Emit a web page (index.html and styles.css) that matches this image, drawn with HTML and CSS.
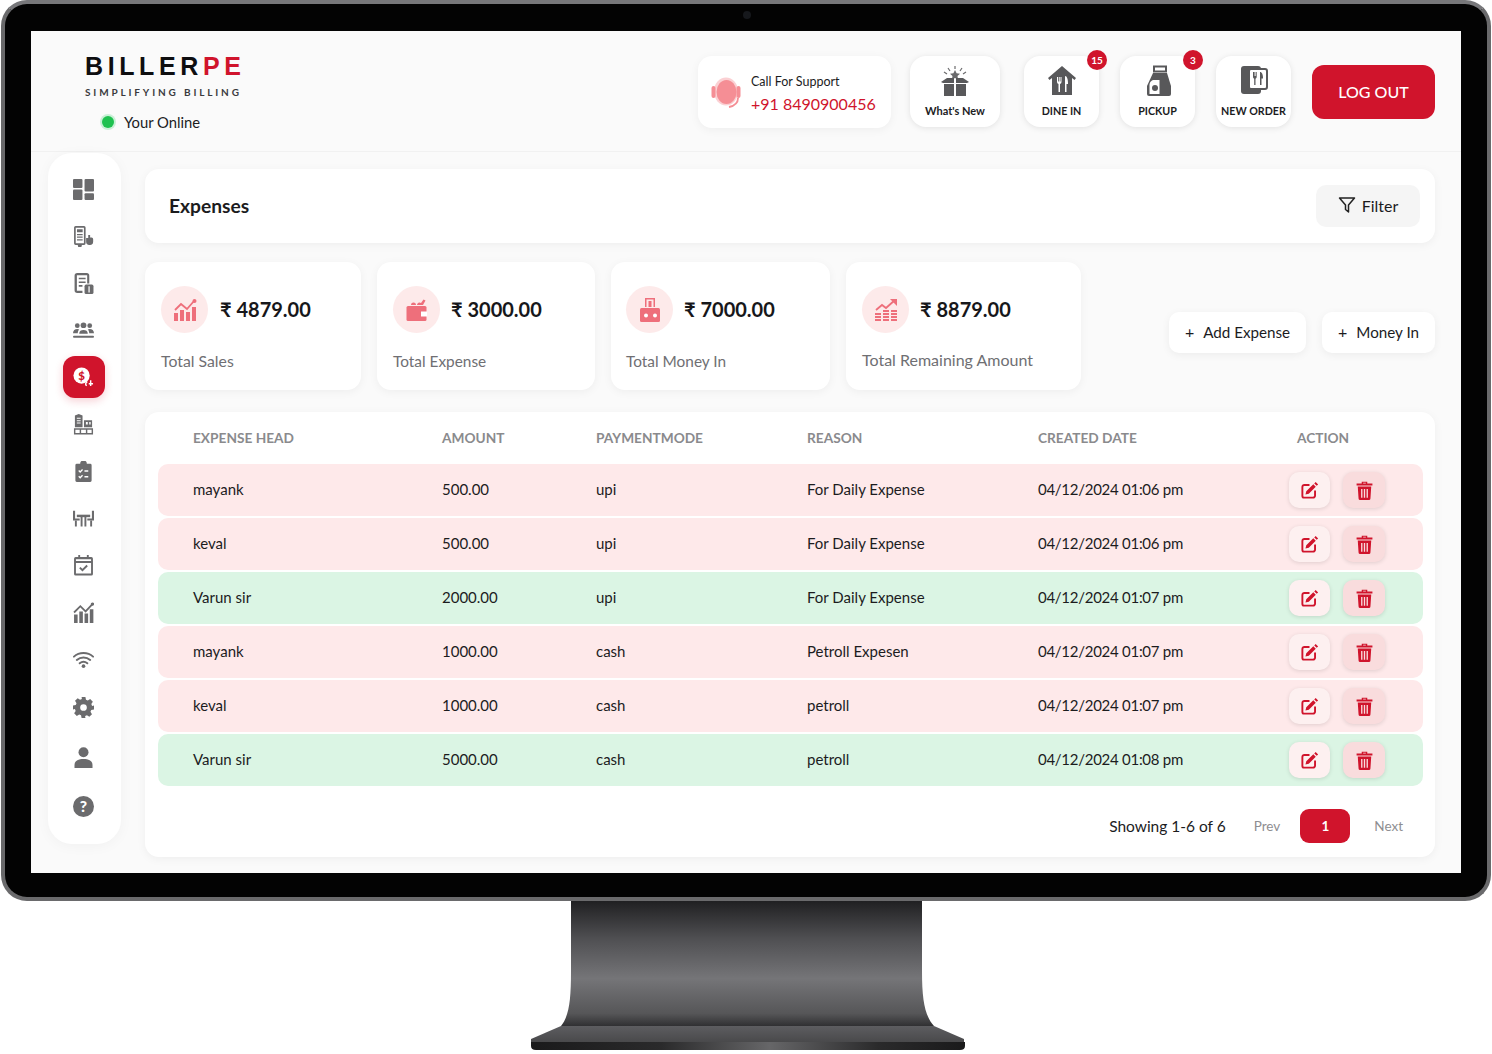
FILE: index.html
```html
<!DOCTYPE html>
<html lang="en">
<head>
<meta charset="utf-8">
<title>BillerPe Expenses</title>
<link rel="stylesheet" href="styles.css">
</head>
<body>
<svg class="defs" width="0" height="0" aria-hidden="true">
  <symbol id="i-edit" viewBox="0 0 24 24">
    <path d="M12 5H5.500A2.500 2.500 0 0 0 3 7.500V19a2 2 0 0 0 2 2h11.500a2.500 2.500 0 0 0 2.500-2.500V12" fill="none" stroke="currentColor" stroke-width="2.400"/>
    <path d="M19.800 1.200l3.100 3.100-1.800 1.800-3.100-3.100zM16.800 4.200l3.100 3.100-8.800 8.800-4.200 1 1-4.200z" fill="currentColor"/>
  </symbol>
  <symbol id="i-trash" viewBox="0 0 24 24">
    <path d="M8.500 3V1h7v2H22v2.600H2V3zM10.300 2.200V3h3.400v-.8z" fill="currentColor" fill-rule="evenodd"/>
    <path d="M3.500 7h17l-1 15a2 2 0 0 1-2 2h-11a2 2 0 0 1-2-2zM7.700 10v11h1.700V10zM11.150 10v11h1.700V10zM14.600 10v11h1.700V10z" fill="currentColor" fill-rule="evenodd"/>
  </symbol>
</svg>

<div class="monitor">
  <span class="camera"></span>
  <div class="screen">
    <header class="topbar">
      <div class="brand">
        <div class="logo">BILLER<span class="logo-accent">PE</span></div>
        <div class="tagline">SIMPLIFYING BILLING</div>
        <div class="status"><span class="status-dot"></span>Your Online</div>
      </div>
      <div class="top-actions">
        <div class="support">
          <svg class="support-icon" viewBox="0 0 30 32">
            <ellipse cx="15" cy="15.500" rx="12" ry="14" fill="#fbd0d3"/>
            <ellipse cx="15.500" cy="16" rx="10" ry="12" fill="#f58e95"/>
            <rect x="0.500" y="10" width="4" height="12" rx="2" fill="#f58e95"/>
            <rect x="25.500" y="10" width="4" height="12" rx="2" fill="#f58e95"/>
            <path d="M27 22c0 5-4 8-9 9" fill="none" stroke="#f58e95" stroke-width="1.800"/>
          </svg>
          <div class="support-text">
            <div class="support-label">Call For Support</div>
            <div class="support-phone">+91 8490900456</div>
          </div>
        </div>
        <div class="tile tile-new">
          <svg class="tile-icon" viewBox="0 0 32 32">
            <g stroke="#6b6b6d" stroke-width="1.200" fill="none"><path d="M16 1v3M9 3l2 3M23 3l-2 3M5 7l3 2M27 7l-3 2"/></g>
            <path d="M16 5l1.600 3.200 3.400.5-2.500 2.400.6 3.400-3.100-1.600-3.100 1.600.6-3.400-2.500-2.400 3.400-.5z" fill="#6b6b6d"/>
            <path d="M2 17l6-4h7v5H4zM30 17l-6-4h-7v5h11z" fill="#58585a"/>
            <path d="M5 19h10v12H5zM17 19h10v12H17z" fill="#58585a"/>
          </svg>
          <span class="tile-label tile-label-mixed">What's New</span>
        </div>
        <div class="tile tile-dine">
          <svg class="tile-icon" viewBox="0 0 32 32">
            <path d="M16 1L30 13l-1.500 2-2.500-2v17H6V13l-2.500 2L2 13z" fill="#58585a"/>
            <path d="M11 12v5a2 2 0 0 0 1.500 2v8h1.500v-8a2 2 0 0 0 1.500-2v-5h-1v4.500h-.8V12h-.9v4.500H12V12zM19 11c2 0 3 3 3 8h-1.500v8H19z" fill="#fff"/>
          </svg>
          <span class="tile-label">DINE IN</span>
          <span class="badge">15</span>
        </div>
        <div class="tile tile-pickup">
          <svg class="tile-icon" viewBox="0 0 32 32">
            <path d="M12 1.500h12v5H12z" fill="none" stroke="#58585a" stroke-width="2"/>
            <path d="M11 8h14l4 13v8a2 2 0 0 1-2 2H7a2 2 0 0 1-2-2v-8z" fill="#58585a"/>
            <path d="M7.500 20c0-3 2-5 5-5h5v14h-10z" fill="#fff"/>
            <circle cx="13" cy="23" r="3" fill="#58585a"/>
          </svg>
          <span class="tile-label">PICKUP</span>
          <span class="badge">3</span>
        </div>
        <div class="tile tile-order">
          <svg class="tile-icon" viewBox="0 0 32 32">
            <rect x="3" y="1" width="20" height="28" rx="3" fill="#58585a"/>
            <rect x="11" y="4" width="18" height="20" rx="2" fill="#fff" stroke="#58585a" stroke-width="2"/>
            <path d="M15 7v5a2 2 0 0 0 1.200 1.800V20h1.300v-6.200A2 2 0 0 0 18.700 12V7h-.9v4h-.6V7h-.8v4H16V7zM22 7c2 0 3 2.500 3 6.500h-1.500V20H22z" fill="#58585a"/>
          </svg>
          <span class="tile-label">NEW ORDER</span>
        </div>
        <button class="logout">LOG OUT</button>
      </div>
    </header>

    <div class="workspace">
      <nav class="sidebar">
        <a class="nav-item"><svg class="nav-icon" viewBox="0 0 20 20"><rect x="0" y="0" width="9" height="8.500" rx="1"/><rect x="11" y="0" width="9" height="12" rx="1"/><rect x="0" y="10" width="9" height="10" rx="1"/><rect x="11" y="13.500" width="9" height="6.500" rx="1"/></svg></a>
        <a class="nav-item"><svg class="nav-icon" viewBox="0 0 20 20"><path d="M1 1.500A1.500 1.500 0 0 1 2.500 0h8A1.500 1.500 0 0 1 12 1.500v15a1.500 1.500 0 0 1-1.500 1.500H8.500l-.5 2H5l-.5-2h-2A1.500 1.500 0 0 1 1 16.500zM2.600 1.600v14.800h7.800V1.600z" fill-rule="evenodd"/><path d="M3.800 3h5.400v3H3.800zM3.800 7.500h5.400v1.200H3.800zM3.800 10h5.400v1.200H3.800zM3.800 12.500h5.400v1.200H3.800z"/><path d="M14.500 8.500h1.800v2.500h1.400a1.500 1.500 0 0 1 1.500 1.500v2.500a3 3 0 0 1-3 3h-.7a3 3 0 0 1-3-3v-3.500h2z"/></svg></a>
        <a class="nav-item"><svg class="nav-icon" viewBox="0 0 20 20"><path d="M4 0h9a2.500 2.500 0 0 1 2.500 2.500V10h-2V2.200H3.700v14.600H9V19H4a2.500 2.500 0 0 1-2.500-2.500v-14A2.500 2.500 0 0 1 4 0z"/><path d="M5.500 4.500H12V6H5.500zM5.500 8H12v1.500H5.500zM5.500 11.500H9V13H5.500z"/><rect x="11" y="11" width="8.500" height="9" rx="1.500"/><path d="M14.700 12.500h1.200v6h-1.200z" fill="#fff"/></svg></a>
        <a class="nav-item"><svg class="nav-icon" viewBox="0 0 22 20"><circle cx="4.500" cy="5" r="2.500"/><circle cx="11" cy="4.500" r="3"/><circle cx="17.500" cy="5" r="2.500"/><path d="M0 13c0-3 2-4.500 4.500-4.500 1 0 1.500.2 2 .5C5.500 10 5 11.500 5 13zM6.500 13.500c0-3 2-4 4.500-4s4.500 1 4.500 4zM17 13c0-1.500-.5-3-1.500-4 .5-.3 1-.5 2-.5 2.500 0 4.500 1.500 4.500 4.500z"/><rect x="0" y="15.500" width="22" height="2" rx="1"/></svg></a>
        <a class="nav-item is-active"><svg class="nav-icon" viewBox="0 0 22 22"><circle cx="9" cy="9" r="8.500"/><text class="dollar" x="9" y="13.200">$</text><path d="M15 16c-2 0-2.500 3-.5 3.500M18.500 14v6M16.500 17.500h4.500" fill="none" stroke="#fff" stroke-width="1.500"/></svg></a>
        <a class="nav-item"><svg class="nav-icon" viewBox="0 0 22 22"><path d="M2 1.500L6 0l4 1.500V14H2zM4 4v1h4V4zM4 6.500v1h4v-1zM4 9v1h4V9z" fill-rule="evenodd"/><path d="M11.500 6.500H20V14h-8.500zM13.500 8.500V11h2V8.500zM17 8.500V11h1.500V8.500z" fill-rule="evenodd"/><path d="M1 15h20v6.500H1zM2.500 16.500v3.500H7v-3.500zM8.500 16.500v3.500h5v-3.500zM15 16.500v3.500h4.500v-3.500z" fill-rule="evenodd"/></svg></a>
        <a class="nav-item"><svg class="nav-icon" viewBox="0 0 20 22"><path d="M3 3h3.500a3.500 3.500 0 0 1 7 0H17a1.500 1.500 0 0 1 1.500 1.500v16A1.500 1.500 0 0 1 17 22H3a1.500 1.500 0 0 1-1.500-1.500v-16A1.500 1.500 0 0 1 3 3z"/><path d="M5 10l1.500 1.500L9 9M11 10.500h4M5 16l1.500 1.500L9 15M11 16.500h4" fill="none" stroke="#fff" stroke-width="1.400"/></svg></a>
        <a class="nav-item"><svg class="nav-icon" viewBox="0 0 22 20"><path d="M0 2h2.200v8H7v2.200H0zM19.800 2H22v10.200h-7V10h4.800z"/><rect x="4" y="6" width="14" height="2.600"/><path d="M8 8.500h2v10H8zM12 8.500h2v10h-2zM2 12h2v6.500H2zM18 12h2v6.500h-2z"/></svg></a>
        <a class="nav-item"><svg class="nav-icon" viewBox="0 0 20 20"><path d="M5 0h1.800v2h6.400V0H15v2h2.500A1.500 1.500 0 0 1 19 3.500V18a1.500 1.500 0 0 1-1.500 1.500h-15A1.500 1.500 0 0 1 1 18V3.500A1.500 1.500 0 0 1 2.500 2H5zM2.800 7.500V17.700h14.400V7.500zM2.800 4v1.800h14.400V4z" fill-rule="evenodd"/><path d="M6.500 12l2.500 2.500 4.500-4.500" fill="none" stroke="#6b6b6d" stroke-width="1.800"/></svg></a>
        <a class="nav-item"><svg class="nav-icon" viewBox="0 0 20 20"><path d="M1 12h3.400v8H1zM6 9h3.400v11H6zM11 11h3.400v9H11zM16 7h3.400v13H16z"/><path d="M1 10l6-6 5 5 6.500-7" fill="none" stroke="#6b6b6d" stroke-width="1.700"/><circle cx="18.500" cy="2" r="1.600"/></svg></a>
        <a class="nav-item"><svg class="nav-icon" viewBox="0 0 22 18"><path d="M1 6c5.500-5 14.500-5 20 0M4 9.500c4-3.500 10-3.500 14 0M7 13c2.500-2 5.500-2 8 0" fill="none" stroke="#6b6b6d" stroke-width="2" stroke-linecap="round"/><circle cx="11" cy="16" r="1.900"/></svg></a>
        <a class="nav-item"><svg class="nav-icon" viewBox="0 0 22 22"><path d="M9 0h4l.6 2.900 1.900.8 2.500-1.600 2.800 2.800-1.600 2.500.8 1.900L22 9v4l-2.900.6-.8 1.900 1.600 2.500-2.800 2.800-2.500-1.600-1.900.8L13 22H9l-.6-2.900-1.900-.8-2.500 1.600-2.800-2.800 1.600-2.500-.8-1.900L0 13V9l2.900-.6.8-1.900-1.600-2.500L4.900 1.200 7.400 2.800l1.900-.8zM11 7.500a3.500 3.500 0 1 0 0 7 3.500 3.500 0 0 0 0-7z" fill-rule="evenodd"/></svg></a>
        <a class="nav-item"><svg class="nav-icon" viewBox="0 0 20 21"><circle cx="10" cy="5.200" r="5"/><path d="M1 21v-3c0-4 3.500-6 9-6s9 2 9 6v3z"/></svg></a>
        <a class="nav-item"><svg class="nav-icon" viewBox="0 0 20 20"><circle cx="10" cy="10" r="10"/><text class="qmark" x="10" y="15">?</text></svg></a>
      </nav>

      <main class="main">
        <section class="panel title-bar">
          <h1 class="page-title">Expenses</h1>
          <button class="filter-btn">
            <svg class="filter-icon" viewBox="0 0 18 18"><path d="M1.500 2h15l-6 7v7l-3-2.500V9z" fill="none" stroke="#222" stroke-width="1.500" stroke-linejoin="round"/></svg>
            Filter
          </button>
        </section>

        <section class="stats-row">
          <div class="panel stat stat-a">
            <div class="stat-top">
              <span class="stat-circle"><svg class="stat-icon" viewBox="0 0 24 24"><path d="M1 15h4v8H1zM7 12h4v11H7zM13 14h4v9h-4zM19 9h4v14h-4z"/><path d="M2 12l6-6 6 5 7-8" fill="none" stroke="#ee6f7b" stroke-width="1.800"/><circle cx="21.500" cy="3" r="2"/></svg></span>
              <span class="stat-value">₹ 4879.00</span>
            </div>
            <div class="stat-label">Total Sales</div>
          </div>
          <div class="panel stat stat-b">
            <div class="stat-top">
              <span class="stat-circle"><svg class="stat-icon" viewBox="0 0 24 24"><rect x="1.500" y="8" width="20" height="15" rx="1.500"/><path d="M16 13.500h6v5h-6z" fill="#fff"/><path d="M6 7a2.500 2.500 0 0 1 5 0zM12 7a2.500 2.500 0 0 1 4-2l2.500-3.500 2 1L18 7z"/></svg></span>
              <span class="stat-value">₹ 3000.00</span>
            </div>
            <div class="stat-label">Total Expense</div>
          </div>
          <div class="panel stat stat-c">
            <div class="stat-top">
              <span class="stat-circle"><svg class="stat-icon" viewBox="0 0 24 24"><rect x="2" y="10" width="20" height="14" rx="1.500"/><circle cx="8" cy="17.500" r="2" fill="#fff"/><circle cx="17" cy="17.500" r="2" fill="#fff"/><path d="M7 0h10v9h-1.500V1.500h-7V9H7z"/><path d="M10.500 3h3v6h-3z"/></svg></span>
              <span class="stat-value">₹ 7000.00</span>
            </div>
            <div class="stat-label">Total Money In</div>
          </div>
          <div class="panel stat stat-d">
            <div class="stat-top">
              <span class="stat-circle"><svg class="stat-icon" viewBox="0 0 24 24"><path d="M1 15h6v2H1zM1 18h6v2H1zM1 21h6v2H1zM9 12h6v2H9zM9 15h6v2H9zM9 18h6v2H9zM9 21h6v2H9zM17 12h6v2h-6zM17 15h6v2h-6zM17 18h6v2h-6zM17 21h6v2h-6z"/><path d="M2 12l6-5 4 3 9-8" fill="none" stroke="#ee6f7b" stroke-width="1.800"/><path d="M16 1h7v7z"/></svg></span>
              <span class="stat-value">₹ 8879.00</span>
            </div>
            <div class="stat-label">Total Remaining Amount</div>
          </div>
          <div class="stat-actions">
            <button class="ghost-btn btn-add"><span class="plus">+</span>Add Expense</button>
            <button class="ghost-btn btn-money"><span class="plus">+</span>Money In</button>
          </div>
        </section>

        <section class="panel table-card">
          <div class="grid-row table-head">
            <span>EXPENSE HEAD</span><span>AMOUNT</span><span>PAYMENTMODE</span><span>REASON</span><span>CREATED DATE</span><span class="head-action">ACTION</span>
          </div>
          <div class="grid-row tr tr-out">
            <span>mayank</span><span>500.00</span><span>upi</span><span>For Daily Expense</span><span class="cell-date">04/12/2024 01:06 pm</span>
            <span class="actions"><button class="act act-edit"><svg class="act-icon"><use href="#i-edit"/></svg></button><button class="act act-del"><svg class="act-icon"><use href="#i-trash"/></svg></button></span>
          </div>
          <div class="grid-row tr tr-out">
            <span>keval</span><span>500.00</span><span>upi</span><span>For Daily Expense</span><span class="cell-date">04/12/2024 01:06 pm</span>
            <span class="actions"><button class="act act-edit"><svg class="act-icon"><use href="#i-edit"/></svg></button><button class="act act-del"><svg class="act-icon"><use href="#i-trash"/></svg></button></span>
          </div>
          <div class="grid-row tr tr-in">
            <span>Varun sir</span><span>2000.00</span><span>upi</span><span>For Daily Expense</span><span class="cell-date">04/12/2024 01:07 pm</span>
            <span class="actions"><button class="act act-edit"><svg class="act-icon"><use href="#i-edit"/></svg></button><button class="act act-del"><svg class="act-icon"><use href="#i-trash"/></svg></button></span>
          </div>
          <div class="grid-row tr tr-out">
            <span>mayank</span><span>1000.00</span><span>cash</span><span>Petroll Expesen</span><span class="cell-date">04/12/2024 01:07 pm</span>
            <span class="actions"><button class="act act-edit"><svg class="act-icon"><use href="#i-edit"/></svg></button><button class="act act-del"><svg class="act-icon"><use href="#i-trash"/></svg></button></span>
          </div>
          <div class="grid-row tr tr-out">
            <span>keval</span><span>1000.00</span><span>cash</span><span>petroll</span><span class="cell-date">04/12/2024 01:07 pm</span>
            <span class="actions"><button class="act act-edit"><svg class="act-icon"><use href="#i-edit"/></svg></button><button class="act act-del"><svg class="act-icon"><use href="#i-trash"/></svg></button></span>
          </div>
          <div class="grid-row tr tr-in">
            <span>Varun sir</span><span>5000.00</span><span>cash</span><span>petroll</span><span class="cell-date">04/12/2024 01:08 pm</span>
            <span class="actions"><button class="act act-edit"><svg class="act-icon"><use href="#i-edit"/></svg></button><button class="act act-del"><svg class="act-icon"><use href="#i-trash"/></svg></button></span>
          </div>
          <div class="pager">
            <span class="pager-info">Showing 1-6 of 6</span>
            <span class="pager-link pager-prev">Prev</span>
            <span class="pager-current">1</span>
            <span class="pager-link">Next</span>
          </div>
        </section>
      </main>
    </div>
  </div>
</div>

<svg class="stand" viewBox="0 0 436 152">
  <defs>
    <linearGradient id="neck" x1="0" y1="0" x2="0" y2="1">
      <stop offset="0" stop-color="#202022"/>
      <stop offset=".3" stop-color="#4f4f52"/>
      <stop offset=".62" stop-color="#757578"/>
      <stop offset=".9" stop-color="#565658"/>
      <stop offset="1" stop-color="#303032"/>
    </linearGradient>
    <linearGradient id="base" x1="0" y1="0" x2="0" y2="1">
      <stop offset="0" stop-color="#5d5d60"/>
      <stop offset="1" stop-color="#48484a"/>
    </linearGradient>
    <linearGradient id="lip" x1="0" y1="0" x2="1" y2="0">
      <stop offset="0" stop-color="#1a1a1b"/>
      <stop offset=".3" stop-color="#2a2a2b"/>
      <stop offset=".55" stop-color="#666668"/>
      <stop offset=".8" stop-color="#2a2a2b"/>
      <stop offset="1" stop-color="#1a1a1b"/>
    </linearGradient>
  </defs>
  <path d="M41 0H392V70C392 100 395 115 404 125H31C39 115 41 100 41 70z" fill="url(#neck)"/>
  <path d="M31 125H404L434 138V142H1V138z" fill="url(#base)"/>
  <path d="M1 141H435V145Q435 149 430 149H6Q1 149 1 145z" fill="url(#lip)"/>
</svg>
</body>
</html>
```

FILE: styles.css
```css
* { box-sizing: border-box; }

html, body {
  margin: 0;
  padding: 0;
  background: #fff;
}

body {
  font-family: "Lato", "Noto Sans", sans-serif;
  color: #1c1c1e;
  overflow: hidden;
}

button { font-family: inherit; cursor: pointer; }

.defs { display: block; height: 0; }

.monitor {
  position: relative;
  width: 1490px;
  height: 901px;
  margin-left: 1px;
  padding: 27px 26px 24px 26px;
  background: #030303;
  border: 4px solid #6a6a6c;
  border-top-color: #77777a;
  border-radius: 26px;
}

.camera {
  position: absolute;
  left: 738px;
  top: 7px;
  width: 8px;
  height: 8px;
  border-radius: 50%;
  background: #16181c;
}

.screen {
  width: 1430px;
  height: 842px;
  background: #fafafa;
  overflow: hidden;
}

/* ---------- top bar ---------- */
.topbar {
  display: flex;
  justify-content: space-between;
  height: 121px;
  padding: 23px 26px 0 54px;
  border-bottom: 1px solid #f1f1f1;
}

.brand { width: 160px; }

.logo {
  font-family: "Liberation Sans", sans-serif;
  font-size: 25px;
  line-height: 24px;
  font-weight: 700;
  letter-spacing: 4.6px;
  color: #0e0e10;
  white-space: nowrap;
}

.logo-accent { color: #d0142c; }

.tagline {
  margin-top: 8px;
  font-size: 10px;
  line-height: 12px;
  letter-spacing: 2.85px;
  font-weight: 700;
  color: #3a3a3e;
  white-space: nowrap;
}

.status {
  display: flex;
  align-items: center;
  margin: 13px 0 0 17px;
  font-size: 14.800px;
  line-height: 22px;
  white-space: nowrap;
}

.status-dot {
  width: 12px;
  height: 12px;
  margin-right: 10px;
  border-radius: 50%;
  background: #1ec14f;
  box-shadow: 0 0 0 2px #c9f0d6;
}

.top-actions {
  display: flex;
  align-items: flex-start;
  padding-top: 2px;
}

.support {
  display: flex;
  align-items: center;
  gap: 10px;
  width: 193px;
  height: 72px;
  padding-left: 13px;
  background: #fff;
  border-radius: 14px;
  box-shadow: 0 2px 10px rgba(0, 0, 0, .05);
}

.support-icon { width: 30px; height: 32px; flex: none; }

.support-text { padding-top: 3px; }

.support-label { font-size: 12.500px; line-height: 16px; color: #1c1c1e; }

.support-phone { margin-top: 4px; font-size: 16px; line-height: 20px; color: #d0142c; white-space: nowrap; }

.tile {
  position: relative;
  display: flex;
  flex-direction: column;
  align-items: center;
  height: 71px;
  padding-top: 9px;
  background: #fff;
  border-radius: 16px;
  box-shadow: 0 1px 6px rgba(0, 0, 0, .1);
}

.tile-new { width: 90px; margin-left: 19px; }
.tile-dine { width: 75px; margin-left: 24px; }
.tile-pickup { width: 75px; margin-left: 21px; }
.tile-order { width: 75px; margin-left: 21px; }

.tile-icon { width: 32px; height: 32px; flex: none; }

.tile-label {
  margin-top: 7px;
  font-size: 10.700px;
  line-height: 14px;
  font-weight: 700;
  color: #1c1c1e;
  white-space: nowrap;
}

.tile-label-mixed { font-size: 11px; }

.badge {
  position: absolute;
  top: -6px;
  right: -8px;
  width: 20px;
  height: 20px;
  border-radius: 50%;
  background: #d0142c;
  color: #fff;
  font-size: 10px;
  font-weight: 700;
  line-height: 20px;
  text-align: center;
}

.logout {
  width: 123px;
  height: 54px;
  margin: 9px 0 0 21px;
  padding-bottom: 2px;
  border: 0;
  border-radius: 12px;
  background: #d0142c;
  color: #fff;
  font-size: 16px;
  font-weight: 500;
}

/* ---------- workspace ---------- */
.workspace {
  display: flex;
  align-items: flex-start;
  gap: 24px;
  padding: 1px 26px 0 17px;
}

.sidebar {
  display: flex;
  flex-direction: column;
  align-items: center;
  width: 73px;
  height: 691px;
  padding: 15px 2px 0 0;
  background: #fff;
  border-radius: 24px;
  box-shadow: 0 2px 14px rgba(0, 0, 0, .04);
}

.nav-item {
  display: flex;
  flex: none;
  align-items: center;
  justify-content: center;
  width: 42px;
  height: 42px;
  margin-bottom: 5.100px;
  border-radius: 12px;
}

.nav-item:nth-last-child(2) { margin-top: 3px; }
.nav-item:last-child { margin-top: 2px; }

.nav-icon { width: 21px; height: 21px; fill: #6b6b6d; }

.is-active { background: #d0142c; box-shadow: 0 3px 8px rgba(208, 20, 44, .2); }
.is-active .nav-icon { fill: #fff; }

.dollar {
  font-family: "Lato", sans-serif;
  font-size: 12px;
  font-weight: 900;
  fill: #d0142c;
  text-anchor: middle;
}

.qmark {
  font-family: "Lato", sans-serif;
  font-size: 15px;
  font-weight: 900;
  fill: #fff;
  text-anchor: middle;
}

.main {
  width: 1290px;
  padding-top: 16px;
}

.panel {
  background: #fff;
  border-radius: 14px;
  box-shadow: 0 2px 10px rgba(0, 0, 0, .05);
}

.title-bar {
  display: flex;
  align-items: center;
  justify-content: space-between;
  height: 74px;
  padding: 0 15px 0 24px;
}

.page-title {
  margin: 0 0 2px;
  font-size: 19.200px;
  font-weight: 700;
  color: #1c1c1e;
}

.filter-btn {
  display: flex;
  align-items: center;
  justify-content: center;
  gap: 6px;
  width: 104px;
  height: 42px;
  padding: 0 0 2px;
  border: 0;
  border-radius: 10px;
  background: #f5f5f5;
  color: #1c1c1e;
  font-size: 16px;
}

.filter-icon { width: 18px; height: 18px; }

/* ---------- stats ---------- */
.stats-row {
  display: flex;
  align-items: flex-start;
  gap: 16px;
  margin-top: 19px;
}

.stat {
  height: 128px;
  padding: 24px 16px 0;
}

.stat-a { width: 216px; }
.stat-b { width: 218px; }
.stat-c { width: 219px; padding-left: 15px; }
.stat-d { width: 235px; }

.stat-top {
  display: flex;
  align-items: center;
  gap: 11px;
}

.stat-a .stat-top { gap: 12px; }

.stat-circle {
  display: flex;
  flex: none;
  align-items: center;
  justify-content: center;
  width: 47px;
  height: 47px;
  border-radius: 50%;
  background: #fdeaea;
}

.stat-icon { width: 24px; height: 24px; fill: #ee6f7b; }

.stat-value {
  padding-bottom: 2px;
  font-size: 20px;
  font-weight: 700;
  color: #17171a;
  white-space: nowrap;
}

.stat-label {
  margin-top: 18px;
  font-size: 15.400px;
  line-height: 20px;
  color: #6f6f73;
  white-space: nowrap;
}

.stat-a .stat-label { font-size: 15.800px; }
.stat-d .stat-label { margin-top: 17px; font-size: 16px; }

.stat-actions {
  display: flex;
  gap: 16px;
  margin: 50px 0 0 auto;
}

.ghost-btn {
  display: flex;
  align-items: center;
  justify-content: center;
  height: 41px;
  padding: 0 0 2px;
  border: 0;
  border-radius: 10px;
  background: #fff;
  box-shadow: 0 2px 8px rgba(0, 0, 0, .06);
  color: #1c1c1e;
  font-size: 15.200px;
}

.btn-add { width: 137px; }
.btn-money { width: 113px; }

.plus { margin-right: 9px; font-size: 16px; }

/* ---------- table ---------- */
.table-card {
  height: 445px;
  margin-top: 22px;
  padding: 0 12px 0 13px;
}

.grid-row {
  display: grid;
  grid-template-columns: 249px 154px 211px 231px 251px 1fr;
  align-items: center;
  padding-left: 35px;
}

.table-head {
  height: 52px;
  padding-bottom: 2px;
  font-size: 13.700px;
  font-weight: 700;
  color: #8a8a8d;
}

.head-action { padding-left: 8px; }

.tr {
  height: 52px;
  margin-bottom: 2px;
  padding-bottom: 2px;
  border-radius: 10px;
  font-size: 15px;
  color: #1c1c1e;
}

.tr-out { background: #fee9ea; }
.tr-in { background: #dbf5e4; }

.cell-date { letter-spacing: -.27px; white-space: nowrap; }

.actions { display: flex; gap: 13px; margin-top: 2px; }

.act {
  display: flex;
  align-items: center;
  justify-content: center;
  width: 41px;
  height: 36px;
  padding: 0;
  border: 0;
  border-radius: 10px;
  color: #d0142c;
  box-shadow: 0 1px 4px rgba(0, 0, 0, .12);
}

.act-edit { background: #fdf0f0; }
.act-del { width: 42px; background: #f9dcdd; }

.act-icon { width: 19px; height: 19px; }

.pager {
  display: flex;
  align-items: center;
  justify-content: flex-end;
  height: 34px;
  margin-top: 23px;
  padding-right: 20px;
}

.pager-info { font-size: 15.500px; color: #1c1c1e; margin-right: 28px; }

.pager-link { font-size: 13.500px; color: #8e8e91; }

.pager-prev { margin-right: 20px; }

.pager-current {
  width: 50px;
  height: 34px;
  margin-right: 24px;
  border-radius: 9px;
  background: #d0142c;
  color: #fff;
  font-size: 13.500px;
  font-weight: 700;
  line-height: 34px;
  text-align: center;
}

/* ---------- stand ---------- */
.stand {
  display: block;
  width: 436px;
  height: 152px;
  margin-left: 530px;
}
```
